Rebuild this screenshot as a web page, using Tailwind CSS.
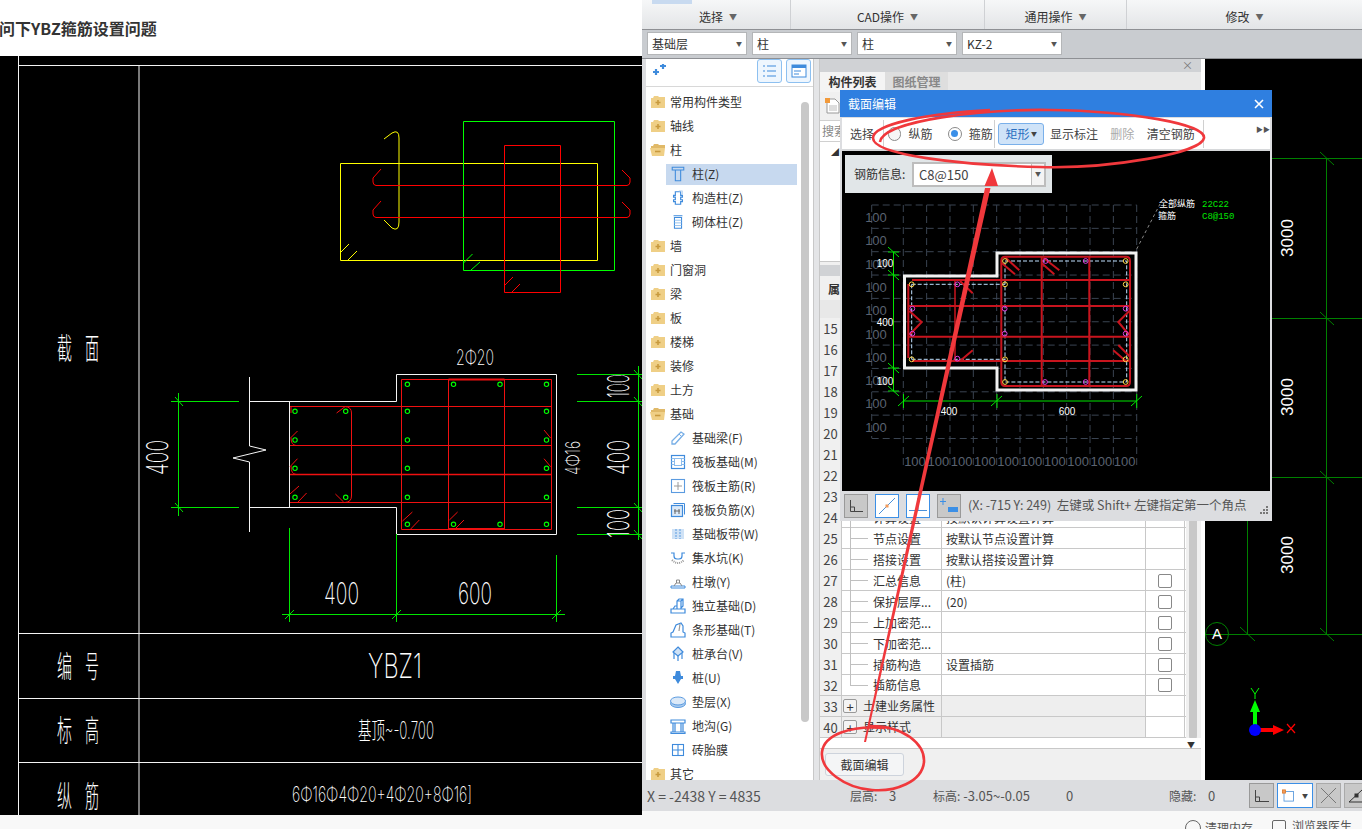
<!DOCTYPE html>
<html lang="zh-CN">
<head>
  <meta charset="UTF-8">
  <title>YBZ箍筋设置问题</title>
  <script src="https://cdn.jsdelivr.net/npm/@tailwindcss/browser@4"></script>
</head>
<body class="bg-white">
<svg width="0" height="0" class="absolute">
  <defs>
    <symbol id="fp" viewBox="0 0 16 14"><path d="M1 3V13H15V2H9L8 1H4L3 3Z" fill="#efcf86"/><path d="M8 5V10M5.5 7.5H10.5" stroke="#c89a3e" stroke-width="1.6"/></symbol>
    <symbol id="fm" viewBox="0 0 16 14"><path d="M1 3V5H15V2H9L8 1H4L3 3Z" fill="#e0b968"/><path d="M0 5H15L14 13H2Z" fill="#efcf86"/><path d="M5 8.5H10.5" stroke="#c89a3e" stroke-width="1.6"/></symbol>
    <symbol id="i-zhu" viewBox="0 0 16 18" fill="none" stroke="#3f8bdc"><path d="M1.5 1.5H14.5V4.5H1.5ZM5 4.5V16.5H11V4.5" stroke-width="1.2"/></symbol>
    <symbol id="i-gz" viewBox="0 0 16 18" fill="none" stroke="#3f8bdc"><path d="M5 2H11V6H13V8H11V11H13V13H11V16H5V13H3V11H5V8H3V6H5Z" stroke-width="1.3"/><path d="M9 1H13V5" stroke="#b6d3f2"/></symbol>
    <symbol id="i-qt" viewBox="0 0 16 18" fill="none" stroke="#3f8bdc"><path d="M3 2H13M4 4H12V16H4Z" stroke-width="1.2"/><path d="M4 7H12M4 10H12M4 13H12" stroke="#8cbcec"/></symbol>
    <symbol id="i-jcl" viewBox="0 0 16 16" fill="none" stroke="#77aee6"><path d="M2 11L11 2L14 4L5 14H2Z" stroke-width="1.3"/><path d="M9 4L12 7" /></symbol>
    <symbol id="i-fb" viewBox="0 0 16 16" fill="none" stroke="#3f8bdc"><rect x="1.5" y="1.5" width="13" height="13" stroke-width="1.2"/><rect x="4.5" y="4.5" width="7" height="7" stroke="#8cbcec"/><path d="M1.5 4.5H4M1.5 7.5H4M1.5 10.5H4M12 4.5H14.5M12 7.5H14.5M12 10.5H14.5" stroke="#8cbcec"/></symbol>
    <symbol id="i-fz" viewBox="0 0 16 16" fill="none" stroke="#5b9be0"><rect x="1.5" y="1.5" width="13" height="13" stroke-width="1.1"/><path d="M8 4V12M4 8H12" stroke="#9a9a9a"/></symbol>
    <symbol id="i-ff" viewBox="0 0 16 16" fill="none" stroke="#3f8bdc"><path d="M3.5 1.5H14.5V12.5" /><rect x="1.5" y="3.5" width="11" height="11" fill="#dbe9f8" stroke-width="1.2"/><path d="M5 7V12M9 7V12M4 9H10" stroke="#666"/></symbol>
    <symbol id="i-bd" viewBox="0 0 16 16"><rect x="2" y="3" width="12" height="10" fill="#cfe2f6"/><path d="M6 3V13M10 3V13" stroke="#5b9be0" stroke-dasharray="2 1"/></symbol>
    <symbol id="i-jsk" viewBox="0 0 16 16" fill="none" stroke="#3f8bdc"><path d="M1 3H4V6Q4 9 7 9H9Q12 9 12 6V3H15" stroke-width="1.2"/><path d="M2 10Q8 16 14 10" stroke="#999" stroke-dasharray="1 1" stroke-width="2"/></symbol>
    <symbol id="i-zd" viewBox="0 0 16 16" fill="none" stroke="#3f8bdc"><path d="M1 12H15V14H1Z" stroke-width="1"/><path d="M4 12L6 9H10L12 12M6.5 9V6H9.5V9" stroke="#888"/></symbol>
    <symbol id="i-dl" viewBox="0 0 16 16" fill="none" stroke="#3f8bdc" stroke-width="1.2"><path d="M1 11H15V15H1ZM3 11L5 8H7V11M7 8V3L9 1H13V8L11 10V3L13 1M7 3H11"/></symbol>
    <symbol id="i-tx" viewBox="0 0 16 16" fill="none" stroke="#3f8bdc" stroke-width="1.2"><path d="M1 15V11L3 10L6 3L11 1L13 4V10L15 11V15Z"/><path d="M10 2L9 9" stroke="#9a9a9a"/></symbol>
    <symbol id="i-zct" viewBox="0 0 16 16" fill="none" stroke="#3f8bdc" stroke-width="1.2"><path d="M8 1L13 6L8 10L3 6Z" fill="#cfe2f6"/><path d="M4 7V13M8 10V15M12 7V13"/></symbol>
    <symbol id="i-z" viewBox="0 0 16 16"><path d="M6 1H10L11 6H13V9H11L8 14L5 9H3V6H5Z" fill="#3f8bdc"/></symbol>
    <symbol id="i-dc" viewBox="0 0 16 16"><ellipse cx="8" cy="9.5" rx="7.5" ry="4" fill="#a9cbee" stroke="#5b9be0"/><ellipse cx="8" cy="7" rx="7.5" ry="4" fill="#dbe9f8" stroke="#5b9be0"/></symbol>
    <symbol id="i-dg" viewBox="0 0 16 16" fill="none" stroke="#3f8bdc" stroke-width="1.2"><path d="M1 2H15V5H1ZM1 14H15V15.5H1ZM3 5V14H5V5M11 5V14H13V5"/></symbol>
    <symbol id="i-zt" viewBox="0 0 16 16" fill="none" stroke="#3f8bdc" stroke-width="1.1"><rect x="2.5" y="2.5" width="11" height="11"/><path d="M8 2.5V13.5M2.5 8H13.5"/></symbol>
  </defs>
</svg>

<div class="relative flex w-[1362px] h-[829px] overflow-hidden font-['Noto_Sans_CJK_SC','Noto_Sans',sans-serif] text-[12px] leading-none text-[#333]">

  <!-- 左侧问答页 -->
  <div class="flex flex-col w-[642px] shrink-0">
    <div class="flex items-center h-14 bg-white font-bold text-[16px] pb-[1px] -ml-[1px]">问下YBZ箍筋设置问题</div>
    <svg class="block bg-black" width="642" height="759" viewBox="0 56 642 759" fill="none" font-family="Inter, 'Noto Sans CJK SC', sans-serif" font-weight="200">
      <g stroke="#f4f4f4" stroke-width="1">
        <path d="M18.5 56V815M139 65V815M18.5 65.5H642M18.5 633.5H642M18.5 698.5H642M18.5 762.5H642"/>
        <path d="M249.5 377V446L266 450L233 458L249.5 462V532M249.5 401.5H396.5V374.5H556.5V534.5H396.5V507.5H249.5M289.5 401.5V507.5"/>
      </g>
      <!-- 上部分解钢筋 -->
      <g transform="translate(-2 0)">
        <g stroke="#ffff00"><path d="M342.5 163.5H599.5V260.5H342.5ZM386 139L394 133Q401 129 401 138V222Q401 232 394 228L386 220M342 253L351 244M350 260L359 251"/></g>
        <g stroke="#00ff00"><path d="M465.5 121.5H616.5V270.5H465.5ZM465.5 263L474.5 254M473 270L482 262"/></g>
        <g stroke="#ff0000">
          <path d="M506.5 145.5H562.5V292.5H506.5ZM507 285L515 277M514 292L522 284"/>
          <path d="M383 169L375 178V182Q375 185 378 185.5H629Q632 185 632 182V178L624 170M383 201L375 210V214Q375 217 378 217.5H629Q632 217 632 214V210L624 202"/>
        </g>
      </g>
      <!-- 截面配筋 -->
      <g stroke="#f01010">
        <path d="M401.5 379.5H551.5V529.5H401.5ZM448.5 379V529M504.5 379V529M290 406.5H551M290 445.5H551M290 502.5H551M345 406.5Q351.5 407 351.5 413V496Q351.5 502 345 502.5M291 406V413M291 438Q291 445 296 445.5M291 466Q291 474 296 474.5"/>
        <path d="M290 474.5H551" stroke-width="1.6"/>
        <path d="M448.5 379.5H504.5M448.5 529H504.5" stroke-width="2"/>
        <path d="M290.5 438L297.5 431M290 466.7L297.5 458.7M290 494L299 486M298 502L306.6 493M336.6 413L345 406.7M335.4 494L343.6 502M544 430L550.6 438M544 458.7L550.6 466.7M402.5 521L412.4 512M410.7 529L419.3 520M449.4 520L457.6 512M456 528L464 520"/>
      </g>
      <g stroke="#00ff00" stroke-width="1.1" id="ybzDots"></g>
      <g stroke="#00e600">
        <path d="M178.5 393V516M171 401.5H239M171 507.5H239M175 397L183 406M175 503L183 512"/>
        <path d="M577 374.5H642M577 401.5H642M577 507.5H642M577 534.5H642M638.5 366V540M634 370L642 379M634 397L642 406M634 503L642 512M634 530L642 539"/>
        <path d="M282 614.5H565M289.5 528V622M396.5 534V622M556.5 555V622M285 619L294 610M392 619L401 610M552 619L561 610"/>
      </g>
      <!-- 图上文字 -->
      <g fill="#fff" stroke="none">
        <text x="456" y="365" font-size="21" textLength="38" lengthAdjust="spacingAndGlyphs">2Φ20</text>
        <text x="324" y="604" font-size="30" textLength="35" lengthAdjust="spacingAndGlyphs">400</text>
        <text x="458" y="604" font-size="30" textLength="34" lengthAdjust="spacingAndGlyphs">600</text>
        <text transform="translate(168 475) rotate(-90)" font-size="30" textLength="35" lengthAdjust="spacingAndGlyphs">400</text>
        <text transform="translate(629 398) rotate(-90)" font-size="30" textLength="24" lengthAdjust="spacingAndGlyphs">100</text>
        <text transform="translate(629 475) rotate(-90)" font-size="30" textLength="35" lengthAdjust="spacingAndGlyphs">400</text>
        <text transform="translate(629 538) rotate(-90)" font-size="30" textLength="29" lengthAdjust="spacingAndGlyphs">100</text>
        <text transform="translate(580 475) rotate(-90)" font-size="20" textLength="34" lengthAdjust="spacingAndGlyphs">4Φ16</text>
        <g font-family="'Noto Sans CJK SC'" font-size="30" font-weight="300">
          <text x="57" y="359" textLength="15" lengthAdjust="spacingAndGlyphs">截</text><text x="85" y="359" textLength="14" lengthAdjust="spacingAndGlyphs">面</text>
          <text x="57" y="677" textLength="15" lengthAdjust="spacingAndGlyphs">编</text><text x="85" y="677" textLength="14" lengthAdjust="spacingAndGlyphs">号</text>
          <text x="57" y="741" textLength="15" lengthAdjust="spacingAndGlyphs">标</text><text x="85" y="741" textLength="14" lengthAdjust="spacingAndGlyphs">高</text>
          <text x="57" y="807" textLength="15" lengthAdjust="spacingAndGlyphs">纵</text><text x="85" y="807" textLength="14" lengthAdjust="spacingAndGlyphs">筋</text>
        </g>
        <text x="368" y="678" font-size="34" textLength="54" lengthAdjust="spacingAndGlyphs">YBZ1</text>
        <text x="358" y="739" font-size="24" textLength="76" lengthAdjust="spacingAndGlyphs">基顶~-0.700</text>
        <text x="292" y="802" font-size="21" textLength="180" lengthAdjust="spacingAndGlyphs">6Φ16Φ4Φ20+4Φ20+8Φ16]</text>
      </g>
    </svg>
    <div class="flex-1 bg-[#f8f8f8]"></div>
  </div>

  <!-- 右侧软件窗口 -->
  <div class="flex flex-col w-[720px] shrink-0 bg-[#f8f8f8] overflow-hidden">
    <div class="flex flex-col border-l-[4px] border-[#dcdde0] bg-[#dcdde0]">
      <!-- 功能区 -->
      <div class="relative flex h-[30px] -ml-[4px] pl-[4px] bg-gradient-to-b from-[#f6f7f8] to-[#e3e5e7] border-b border-[#8e9094]">
        <div class="absolute left-[10px] top-0 w-[40px] h-[4px] bg-[#c8daf0]"></div>
        <div class="flex items-center justify-center w-[145px] h-full pt-[5px] border-r border-[#cfd1d4]">选择<span class="ml-1.5 text-[#666] text-[8px]">▼</span></div>
        <div class="flex items-center justify-center w-[194px] h-full pt-[5px] border-r border-[#cfd1d4]">CAD操作<span class="ml-1.5 text-[#666] text-[8px]">▼</span></div>
        <div class="flex items-center justify-center w-[142px] h-full pt-[5px] border-r border-[#cfd1d4]">通用操作<span class="ml-1.5 text-[#666] text-[8px]">▼</span></div>
        <div class="flex items-center justify-center w-[235px] h-full pt-[5px]">修改<span class="ml-1.5 text-[#666] text-[8px]">▼</span></div>
      </div>
      <!-- 下拉行 -->
      <div class="flex items-center gap-[5px] h-[29px] -ml-[4px] pl-[5px] pb-[1px] bg-[#c9ccd0] border-b border-[#8e9094]">
        <div class="flex items-center justify-between w-[100px] h-[23px] px-[4px] bg-white border border-[#b4b6b8]">基础层<span class="text-[#555] text-[6px]">▼</span></div>
        <div class="flex items-center justify-between w-[100px] h-[23px] px-[4px] bg-white border border-[#b4b6b8]">柱<span class="text-[#555] text-[6px]">▼</span></div>
        <div class="flex items-center justify-between w-[100px] h-[23px] px-[4px] bg-white border border-[#b4b6b8]">柱<span class="text-[#555] text-[6px]">▼</span></div>
        <div class="flex items-center justify-between w-[100px] h-[23px] px-[4px] bg-white border border-[#b4b6b8]">KZ-2<span class="text-[#555] text-[6px]">▼</span></div>
      </div>
      <!-- 主体 -->
      <div class="flex h-[721px]">
        <!-- 构件树 -->
        <div class="flex flex-col w-[168px] shrink-0 bg-white border-r border-[#c8c8c8]">
          <div class="flex items-center h-[28px] border-b border-[#d8d8d8] pb-[3px]">
            <svg class="ml-[5px]" width="16" height="14" viewBox="0 0 16 14"><path d="M9 2H15M12 0V5M2 8H8M5 5V11" stroke="#3f8bdc" stroke-width="2.2"/></svg>
            <button class="flex items-center justify-center w-[25px] h-[24px] ml-[90px] border border-[#8dc0f0] rounded-[3px] bg-[#eef6fe]"><svg width="15" height="14" viewBox="0 0 15 14" fill="none" stroke="#3f8bdc"><path d="M1 2H3M1 7H3M1 12H3M5 2H14M5 7H14M5 12H14"/></svg></button>
            <button class="flex items-center justify-center w-[25px] h-[24px] ml-[4px] border border-[#8dc0f0] rounded-[3px] bg-[#eef6fe]"><svg width="16" height="14" viewBox="0 0 16 14"><rect x="1" y="1" width="14" height="12" fill="#fff" stroke="#3f8bdc"/><rect x="1" y="1" width="14" height="3" fill="#3f8bdc"/><path d="M3 7H10M3 10H8" stroke="#3f8bdc"/></svg></button>
          </div>
          <div class="relative flex-1 overflow-hidden pt-[3px]">
            <div id="tree"></div>
            <div class="absolute left-[155px] top-[15px] w-[8px] h-[620px] rounded bg-[#c8c8c8]"></div>
          </div>
        </div>
        <div class="w-[5px] shrink-0 bg-[#e4e5e7]"></div>
        <!-- 属性面板 -->
        <div class="relative flex flex-col w-[386px] shrink-0 bg-[#f0f0f0] border-l border-[#c8c8c8] border-r-[4px] border-r-white">
          <div class="flex items-center justify-end h-[13px] pr-2 bg-[#d0d2d5] text-[#777] text-[11px]">×</div>
          <div class="flex items-end h-[20px] bg-[#e8e8e8]">
            <div class="flex items-center justify-center w-[65px] h-full bg-[#f4f4f4] font-bold">构件列表</div>
            <div class="flex items-center justify-center w-[63px] h-full bg-[#dedede] text-[#888] font-bold">图纸管理</div>
          </div>
          <div class="flex items-center h-[28px] pl-[5px]">
            <svg width="15" height="16" viewBox="0 0 15 16"><path d="M2 1H10L14 5V15H2Z" fill="#fff" stroke="#999"/><path d="M4 8H12M4 10H12M4 12H12" stroke="#bbb"/><rect x="0" y="0" width="5" height="5" fill="#f29a3a"/></svg>
          </div>
          <div class="flex items-center h-[22px] pl-[2px] bg-white border-y border-[#d0d0d0] text-[#888]">搜索</div>
          <div class="h-[120px] pl-[11px] pt-[6px] bg-white text-[#333] text-[8px] border-b border-[#c8c8c8]">◢</div>
          <div class="h-[3px]"></div>
          <div class="h-[11px] bg-[#d0d2d5]"></div>
          <div class="flex items-center h-[24px] pl-[8px] pt-[1px] font-bold">属性</div>
          <div class="h-[18px] bg-[#e8e8e8]"></div>
          <div class="flex">
            <div id="rows" class="flex flex-col w-[366px]"></div>
            <div class="relative ml-[3px] w-[8px]">
              <div class="absolute left-0 -top-[60px] w-[8px] h-[482px] rounded bg-[#c8c8c8]"></div>
            </div>
          </div>
          <div class="relative h-[11px] bg-white border-b border-[#c8c8c8]">
            <span class="absolute left-[367px] top-[3px] text-[#333] text-[8px]">▼</span>
          </div>
          <div class="flex items-start flex-1 pl-[5px] pt-[4px]">
            <div class="flex items-center justify-center w-[79px] h-[23px] bg-[#f4f5f6] border border-[#cdd3dc] rounded-[3px]">截面编辑</div>
          </div>
        </div>
        <!-- 右侧CAD -->
        <svg class="block bg-black shrink-0" width="157" height="721" viewBox="1205 59 157 721" fill="none">
          <path d="M1205 634.5H1362M1272 158.5H1362M1272 318.5H1362M1272 477.5H1362M1326.5 158V634M1247.5 500V634" stroke="#008000"/>
          <path d="M1320 152L1334 165M1320 312L1334 325M1320 471L1334 484M1320 628L1334 641M1240 627L1255 641" stroke="#008000"/>
          <circle cx="1217" cy="634" r="11.5" stroke="#008000"/>
          <text x="1217" y="639" text-anchor="middle" font-family="'Liberation Sans'" font-size="15" fill="#fff">A</text>
          <g fill="#fff" font-family="'Liberation Sans'" font-size="17">
            <text transform="translate(1293 257) rotate(-90)" textLength="38">3000</text>
            <text transform="translate(1293 416) rotate(-90)" textLength="38">3000</text>
            <text transform="translate(1293 574) rotate(-90)" textLength="38">3000</text>
          </g>
          <path d="M1253 726V706H1257V726Z" fill="#00ff00"/>
          <path d="M1255 700L1260 712H1250Z" fill="#00ff00"/>
          <path d="M1260 728H1275V732H1260Z" fill="#ff0000"/>
          <path d="M1284 730L1273 725V735Z" fill="#ff0000"/>
          <circle cx="1255" cy="730" r="6" fill="#0000ff"/>
          <path d="M1251 688L1255 694L1259 688M1255 694V699" stroke="#00ff00"/>
          <path d="M1287 724L1295 733M1295 724L1287 733" stroke="#ff0000" stroke-width="1.2"/>
        </svg>
      </div>
      <!-- 状态栏 -->
      <div class="flex items-center h-[31px] pl-[1px] text-[#555] text-[14px]">
        <span class="w-[203px] shrink-0">X = -2438 Y = 4835</span>
        <span class="w-[83px] shrink-0 text-[13px]"><span class="text-[12px]">层高:</span>&nbsp;&nbsp;&nbsp;&nbsp;3</span>
        <span class="w-[133px] shrink-0 text-[13px]"><span class="text-[12px]">标高:</span> -3.05~-0.05</span>
        <span class="w-[103px] shrink-0 text-[13px]">0</span>
        <span class="w-[80px] shrink-0 text-[13px]"><span class="text-[12px]">隐藏:</span>&nbsp;&nbsp;&nbsp;&nbsp;0</span>
        <div class="flex items-center justify-center w-[25px] h-[25px] shrink-0 bg-[#c8c8c8] border border-[#999]">
          <svg width="16" height="16" viewBox="0 0 16 16" fill="none" stroke="#444"><path d="M1.5 2V13.5H15M1.5 9H5.5V13.5"/></svg>
        </div>
        <div class="flex items-center gap-1 w-[36px] h-[25px] ml-[3px] px-1 shrink-0 bg-white border border-[#3b8fe6]">
          <svg width="15" height="15" viewBox="0 0 15 15" fill="none"><rect x="2.5" y="2.5" width="12" height="12" stroke="#4a90d9"/><rect x="0.5" y="0.5" width="4" height="4" fill="#f29a5a" stroke="#d8782a"/></svg>
          <span class="ml-1 text-[#444] text-[6px]">▼</span>
        </div>
        <div class="flex items-center justify-center w-[25px] h-[25px] ml-[3px] shrink-0 bg-[#c8c8c8] border border-[#aaa]">
          <svg width="17" height="17" viewBox="0 0 17 17" fill="none" stroke="#777"><path d="M1 1L16 16M16 1L1 16"/></svg>
        </div>
        <div class="flex items-center justify-center w-[25px] h-[25px] ml-[3px] shrink-0 bg-[#c8c8c8] border border-[#aaa]">
          <svg width="17" height="17" viewBox="0 0 17 17" fill="none" stroke="#333"><path d="M1 15H16M1 15L14 3"/><rect x="7" y="7" width="3" height="3" fill="#333"/></svg>
        </div>
      </div>
    </div>
    <div class="h-[2px] bg-[#1d4a7f]"></div>
    <div class="flex flex-1 justify-end items-start gap-[19px] pt-[9px] pr-[10px] bg-[#f8f8f8] text-[#555]">
      <span class="flex items-center gap-[4px]"><span class="block w-[16px] h-[16px] rounded-full border border-[#666]"></span>清理内存</span>
      <span class="flex items-center gap-[6px]"><span class="block w-[14px] h-[12px] border border-[#666] rounded-[2px]"></span>浏览器医生</span>
    </div>
  </div>

  <!-- 截面编辑对话框 -->
  <div class="absolute left-[840px] top-[90px] flex flex-col w-[432px] h-[431px] bg-[#dcdde0]">
    <div class="flex items-center justify-between h-[27px] pl-2 pr-[8px] bg-[#2f7fe0] text-white">
      <span class="text-[12px]">截面编辑</span>
      <svg width="10" height="10" viewBox="0 0 10 10" stroke="#fff" stroke-width="1.6"><path d="M1 1L9 9M9 1L1 9"/></svg>
    </div>
    <div class="flex items-center h-[33px] mx-[2px] mt-[1px] bg-white border-b-[2px] border-[#d6d8da] text-[#444]">
      <span class="ml-[8px] w-[33px]">选择</span>
      <span class="w-px h-[28px] bg-[#d0d0d0]"></span>
      <span class="block w-[14px] h-[14px] ml-[4px] rounded-full border border-[#8a8a8a] bg-[#f6f6f6]"></span>
      <span class="ml-[7px] w-[40px]">纵筋</span>
      <span class="flex items-center justify-center w-[14px] h-[14px] rounded-full border border-[#8a8a8a]"><span class="block w-[7px] h-[7px] rounded-full bg-[#3a8fe8]"></span></span>
      <span class="ml-[7px] w-[26px]">箍筋</span>
      <span class="w-px h-[28px] bg-[#d0d0d0]"></span>
      <div class="flex items-center justify-between w-[46px] h-[22px] ml-[3px] px-[6px] bg-[#cfe3f8] border border-[#7ab0ea] rounded-[3px] text-[#2a6fc0]">矩形<span class="text-[#444] text-[6px]">▼</span></div>
      <span class="ml-[6px] w-[61px]">显示标注</span>
      <span class="w-[37px] text-[#aaa]">删除</span>
      <span class="w-[57px]">清空钢筋</span>
      <span class="w-px h-[28px] bg-[#d0d0d0]"></span>
      <span class="ml-[52px] -mt-[8px] text-[#555] text-[7px]">▶▶</span>
    </div>
    <div class="relative mx-[2px] h-[340px] bg-black">
      <svg id="canvas" class="block" width="428" height="340" viewBox="842 150 428 340" fill="none">
        <g id="grid"></g>
        <path d="M1136.7 248L1160 203" stroke="#888" stroke-dasharray="3 3"/>
        <path d="M904.5 275H997V252H1136V389H997V367H904.5Z" stroke="#f2f2f2" stroke-width="3"/>
        <path d="M1005 260H1126.7V381H1005ZM911.7 283.3H1005M911.7 358.3H1005M911.7 283.3V358.3" stroke="#bfe0ff" stroke-dasharray="4 2"/>
        <g stroke="#c8141e" stroke-width="2">
          <path d="M1005 255.7H1126Q1130 255.7 1130 260V381Q1130 385 1126 385H1005Q1001.3 385 1001.3 381V260Q1001.3 255.7 1005 255.7Z"/>
          <path d="M912 279H1130M909 305H1130M909 335.7H1130M912 360H1130M908.3 283V357M1041.7 255.7V385M1089.3 255.7V385"/>
          <path d="M955 279V360" stroke-width="1.5"/>
          <path d="M1005.7 256.7L1019.3 269.3M1002 262.3L1015 273.3M1043.3 256.7L1059.3 269.3M1041.7 262.3L1054.3 273.3M960 280L972.7 292.3M960 360L972.7 349.3M909.3 310L921.7 321L909.3 334M1129.3 310L1118.3 321L1129.3 334M1113.3 349.3L1126.7 360.7M1118.3 344L1130 355.7"/>
        </g>
        <g id="rebars"></g>
        <path d="M893.5 251V390M888 251H899M888 274H899M888 367H899M888 390H899M903.5 400H1136.7M903.5 393V407M997 393V407M1136.7 393V407M888 246L899 256M888 269L899 279M888 362L899 372M888 385L899 395M898 405L909 395M991 405L1002 395M1131 405L1142 395" stroke="#00e600"/>
        <g fill="#fff" font-family="'Liberation Sans'" font-size="10" text-anchor="middle">
          <text x="885" y="266">100</text><text x="885" y="325">400</text><text x="885" y="384">100</text>
          <text x="949" y="414">400</text><text x="1067" y="414">600</text>
          <text x="1177" y="206" font-family="'Noto Sans CJK SC'" font-size="9">全部纵筋</text>
          <text x="1167" y="218" font-family="'Noto Sans CJK SC'" font-size="9">箍筋</text>
        </g>
        <g fill="#00e600" font-family="'Liberation Mono'" font-size="9">
          <text x="1202" y="206">22C22</text><text x="1202" y="218">C8@150</text>
        </g>
      </svg>
      <div class="absolute left-[3px] top-[4px] flex items-center w-[207px] h-[38px] pl-[9px] bg-[#e1e6e8]">
        <span class="w-[58px]">钢筋信息:</span>
        <div class="flex items-center w-[134px] h-[25px] bg-white border-2 border-[#bdbdbd]">
          <span class="flex-1 pl-[5px] text-[13px] text-[#444]">C8@150</span>
          <span class="flex items-center justify-center w-[13px] h-full border-l border-[#bdbdbd] bg-[#f4f4f4] text-[#555] text-[6px]">▼</span>
        </div>
      </div>
    </div>
    <div class="flex items-center flex-1 pl-[4px] pb-[1px] text-[#555]">
      <div class="flex items-center justify-center w-[24px] h-[24px] bg-[#c8c8c8] border border-[#999]">
        <svg width="15" height="14" viewBox="0 0 15 14" fill="none" stroke="#444"><path d="M1.5 1V12.5H14M1.5 8H5.5V12.5"/></svg>
      </div>
      <div class="flex items-center justify-center w-[24px] h-[24px] ml-[7px] bg-white border border-[#3b8fe6]">
        <svg width="20" height="20" viewBox="0 0 20 20" fill="none"><path d="M2 18L18 2" stroke="#4a90d9"/><rect x="8.5" y="8.5" width="3" height="3" fill="#f29a5a"/></svg>
      </div>
      <div class="flex items-center justify-center w-[24px] h-[24px] ml-[7px] bg-white border border-[#3b8fe6]">
        <svg width="20" height="20" viewBox="0 0 20 20" fill="none" stroke="#4a90d9"><path d="M1 14.5H19M10 2V14.5"/></svg>
      </div>
      <div class="flex items-center justify-center w-[24px] h-[24px] ml-[7px] bg-[#c8c8c8] border border-[#999]">
        <svg width="20" height="18" viewBox="0 0 20 18"><path d="M4 1V8M1 4.5H7" stroke="#3b8fe6"/><rect x="9" y="10" width="10" height="5" fill="#3b8fe6"/></svg>
      </div>
      <span class="ml-[7px] text-[12.5px] whitespace-nowrap">(X: -715 Y: 249)&nbsp; 左键或 Shift+ 左键指定第一个角点</span>
      <svg class="ml-[13px] mt-[10px]" width="9" height="9" viewBox="0 0 9 9" fill="#777"><path d="M6 0H8V2H6ZM3 3H5V5H3ZM6 3H8V5H6ZM0 6H2V8H0ZM3 6H5V8H3ZM6 6H8V8H6Z"/></svg>
    </div>
  </div>

  <!-- 红色标注 -->
  <svg class="absolute left-0 top-0 pointer-events-none" width="1362" height="829" viewBox="0 0 1362 829" fill="none">
    <path d="M880 142C883 120 985 109 1050 110C1130 111 1206 124 1204 138C1202 153 1110 169 1040 167C960 165 873 155 873 138C873 124 930 113 990 110" stroke="#f0383c" stroke-width="2.6"/>
    <path d="M868 726C905 725 925 745 924 762C922 782 895 792 872 790C845 788 820 770 822 752C824 735 850 725 885 728" stroke="#f0383c" stroke-width="2.6"/>
    <path d="M864 742L985 188H990.5L866 742Z" fill="#f0383c"/>
    <path d="M992 168L998 186H984.5Z" fill="#f0383c"/>
  </svg>
</div>

<script>
  // 构件树
  const tree = [
    ['常用构件类型','fp',0],['轴线','fp',0],['柱','fm',0],['柱(Z)','i-zhu',1],['构造柱(Z)','i-gz',1],['砌体柱(Z)','i-qt',1],
    ['墙','fp',0],['门窗洞','fp',0],['梁','fp',0],['板','fp',0],['楼梯','fp',0],['装修','fp',0],['土方','fp',0],['基础','fm',0],
    ['基础梁(F)','i-jcl',1],['筏板基础(M)','i-fb',1],['筏板主筋(R)','i-fz',1],['筏板负筋(X)','i-ff',1],['基础板带(W)','i-bd',1],
    ['集水坑(K)','i-jsk',1],['柱墩(Y)','i-zd',1],['独立基础(D)','i-dl',1],['条形基础(T)','i-tx',1],['桩承台(V)','i-zct',1],
    ['桩(U)','i-z',1],['垫层(X)','i-dc',1],['地沟(G)','i-dg',1],['砖胎膜','i-zt',1],['其它','fp',0]
  ];
  document.getElementById('tree').innerHTML = tree.map(([name, icon, child]) => {
    if (!child) return `<div class="flex items-center h-6 pl-[4px]"><svg width="16" height="14" class="mr-[4px]"><use href="#${icon}"/></svg>${name}</div>`;
    const on = name === '柱(Z)' ? 'bg-[#c7d9ef]' : '';
    return `<div class="flex items-center h-6 ml-[20px] w-[131px]"><div class="flex items-center w-full h-[21px] ${on}"><svg width="16" height="16" class="ml-[4px] mr-[6px]"><use href="#${icon}"/></svg>${name}</div></div>`;
  }).join('');

  // 属性表
  const rows = [
    [15,'',''],[16,'',''],[17,'',''],[18,'',''],[19,'',''],[20,'',''],[21,'',''],[22,'',''],[23,'',''],
    [24,'计算设置','按默认计算设置计算'],[25,'节点设置','按默认节点设置计算'],[26,'搭接设置','按默认搭接设置计算'],
    [27,'汇总信息','(柱)',1],[28,'保护层厚...','(20)',1],[29,'上加密范...','',1],[30,'下加密范...','',1],
    [31,'插筋构造','设置插筋',1],[32,'插筋信息','',1],[33,'土建业务属性','',2],[40,'显示样式','',2]
  ];
  document.getElementById('rows').innerHTML = rows.map(([n, name, val, kind]) => {
    const head = kind === 2;
    const line = n === 32 ? 'h-[11px] self-start' : 'h-[21px]';
    const nameCell = head
      ? `<span class="flex items-center justify-center w-[14px] h-[14px] ml-[1px] mr-[6px] border border-[#999] rounded-[2px] bg-[#f4f4f4] text-[13px]">+</span>${name}`
      : `<span class="flex items-center ${line} ml-[8px] w-[18px] mr-[5px] border-l border-[#c0c0c0]"><span class="w-full border-t border-[#c0c0c0] ${n === 32 ? 'mt-[10px]' : ''}"></span></span>${name}`;
    const check = kind === 1 ? '<span class="block w-[14px] h-[14px] border border-[#888] rounded-[2px] bg-white"></span>' : '';
    return `<div class="grid grid-cols-[22px_100px_204px_39px] h-[21px] border-b border-[#c8c8c8] bg-white">
      <div class="flex items-center justify-center bg-[#f0f0f0] text-[13px] text-[#444] border-r border-[#c8c8c8]">${n}</div>
      <div class="flex items-center border-r border-[#c8c8c8] whitespace-nowrap ${head ? 'bg-[#eeeeee]' : ''}">${nameCell}</div>
      <div class="flex items-center pl-[4px] border-r border-[#c8c8c8] ${head ? 'bg-[#eeeeee]' : ''}">${val}</div>
      <div class="flex items-center justify-center border-r border-[#c8c8c8]">${check}</div>
    </div>`;
  }).join('');

  // 截面配筋上的小圆点
  const dots = [];
  [384.3, 524.3].forEach(y => [407.4, 453.5, 500, 546.5].forEach(x => dots.push([x, y])));
  [[411.3, [295, 345.7, 407.4, 546.5]], [440, [295, 407.4, 546.5]], [468.3, [295, 407.4, 546.5]], [497.3, [295, 345.7, 407.4, 546.5]]]
    .forEach(([y, xs]) => xs.forEach(x => dots.push([x, y])));
  document.getElementById('ybzDots').innerHTML = dots.map(([x, y]) => `<circle cx="${x}" cy="${y}" r="2.2"/>`).join('');

  // 对话框画布的网格
  let grid = '';
  for (let i = 0; i <= 10; i++) {
    const x = 903.3 + i * 23.34, y = 204 + i * 23.35;
    grid += `<path d="M${x} 204V467" stroke="#3a4452" stroke-dasharray="7 4"/>`;
    grid += `<path d="M871.7 ${y}H1136.7" stroke="#3a4452" stroke-dasharray="7 4"/>`;
  }
  grid += '<path d="M871.7 204V437" stroke="#3a4452" stroke-dasharray="7 4"/>';
  for (let i = 0; i < 10; i++) {
    grid += `<text x="876" y="${221 + i * 23.3}" fill="#5a6270" font-family="Liberation Sans" font-size="13" text-anchor="middle">100</text>`;
    grid += `<text x="${915 + i * 23.3}" y="465" fill="#5a6270" font-family="Liberation Sans" font-size="13" text-anchor="middle">100</text>`;
  }
  document.getElementById('grid').innerHTML = grid;

  const yellow = [[495,210],[857,210],[215,280],[495,280],[857,280],[215,505],[495,505],[857,505],[495,573],[857,573]];
  const pink = [[617,210],[737,210],[352,280],[217,353],[494,353],[857,353],[217,428],[494,428],[857,428],[352,503],[615,573],[737,573]];
  const rebar = (list, color) => list.map(([X, Y]) => `<circle cx="${840 + X / 3}" cy="${190 + Y / 3}" r="2.4" stroke="${color}"/>`).join('');
  document.getElementById('rebars').innerHTML = rebar(yellow, '#ffd84a') + rebar(pink, '#e040e0');
</script>
</body>
</html>
